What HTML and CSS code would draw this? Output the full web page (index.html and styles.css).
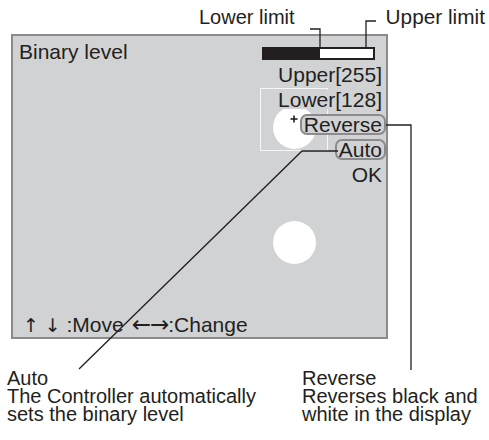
FILE: index.html
```html
<!DOCTYPE html>
<html lang="en">
<head>
    <meta charset="UTF-8">
    <meta name="viewport" content="width=device-width, initial-scale=1.0">
    <title>Binary level</title>
    <link rel="stylesheet" href="styles.css">
</head>
<body>
    <div class="figure">
        <!-- Callouts above the screen -->
        <div class="limits">
            <span class="limit-lower">Lower limit</span>
            <span class="limit-upper">Upper limit</span>
        </div>

        <!-- Controller screen -->
        <div class="screen">
            <div class="view">
                <div class="frame"></div>
                <div class="spot spot-top"></div>
                <div class="spot spot-bottom"></div>
            </div>

            <div class="screen-head">
                <span class="title">Binary level</span>
                <div class="level-bar"><div class="level-fill" style="width: 51%"></div></div>
            </div>

            <ul class="menu">
                <li><span>Upper[255]</span></li>
                <li><span>Lower[128]</span></li>
                <li><span class="boxed">Reverse</span></li>
                <li><span class="boxed">Auto</span></li>
                <li><span>OK</span></li>
            </ul>

            <div class="keys"><span class="arrow">↑</span> <span class="arrow">↓</span> :Move<span class="arrow arrow-wide">←→</span>:Change</div>
        </div>

        <!-- Notes under the screen -->
        <div class="notes">
            <p class="note note-auto">Auto<br>The Controller automatically<br>sets the binary level</p>
            <p class="note note-reverse">Reverse<br>Reverses black and<br>white in the display</p>
        </div>

        <!-- Leader lines -->
        <svg class="leaders" width="489" height="440" viewBox="0 0 489 440">
            <polyline points="310,29 320,29 320,47" />
            <polyline points="376,21 366,21 366,47" />
            <polyline points="386,125 411,125 411,370" />
            <polyline points="338,151 302,151 79,369" />
            <line x1="290.5" y1="119" x2="297.5" y2="119" class="cursor" />
            <line x1="294" y1="115.5" x2="294" y2="122.5" class="cursor" />
        </svg>
    </div>
</body>
</html>
```

FILE: styles.css
```css
body {
    margin: 0;
    background-color: #ffffff;
    color: #231f20;
    font-family: "Liberation Sans", Arial, sans-serif;
}

.figure {
    position: relative;
    width: 489px;
    height: 440px;
    overflow: hidden;
}

/* top callouts */
.limits {
    display: flex;
    padding-top: 7px;
    font-size: 20px;
    line-height: 20px;
}

.limit-lower {
    margin-left: 199px;
}

.limit-upper {
    margin-left: 91px;
    font-size: 20.8px;
}

/* screen */
.screen {
    position: relative;
    display: flex;
    flex-direction: column;
    box-sizing: border-box;
    width: 377px;
    height: 305px;
    margin: 7px 0 0 11px;
    border: 2px solid #8b8b8d;
    background-color: #d1d2d4;
    font-size: 21px;
}

.view .frame {
    position: absolute;
    left: 247px;
    top: 52px;
    width: 68px;
    height: 63px;
    box-sizing: border-box;
    border: 1.5px solid #f7f7f7;
}

.view .spot {
    position: absolute;
    width: 43px;
    height: 43px;
    border-radius: 50%;
    background-color: #ffffff;
}

.spot-top {
    left: 260px;
    top: 70px;
}

.spot-bottom {
    left: 260px;
    top: 185px;
}

.screen-head {
    position: relative;
    display: flex;
    justify-content: space-between;
    align-items: flex-start;
    padding: 6px 11px 0 6px;
}

.title {
    line-height: 20px;
}

.level-bar {
    box-sizing: border-box;
    width: 113px;
    height: 13px;
    margin-top: 5px;
    border: 2px solid #231f20;
    background-color: #ffffff;
}

.level-fill {
    height: 100%;
    background-color: #231f20;
}

.menu {
    position: relative;
    list-style: none;
    margin: 0;
    padding: 0 4px 0 0;
}

.menu li {
    display: flex;
    justify-content: flex-end;
    align-items: center;
    height: 25px;
}

.menu span {
    line-height: 19px;
    background-color: #d1d2d4;
}

.menu .boxed {
    line-height: 17px;
    padding: 0 2px;
    margin-right: -4px;
    border: 2px solid #8b8b8d;
    border-radius: 7px;
}

.keys {
    position: relative;
    margin-top: auto;
    padding-left: 10px;
    line-height: 23px;
}

.keys .arrow {
    font-family: "DejaVu Sans", sans-serif;
    font-size: 19px;
}

.keys .arrow-wide {
    margin-left: 8px;
    font-size: 23px;
    letter-spacing: -1px;
}

/* notes */
.notes {
    display: flex;
    margin-top: 30px;
}

.note {
    margin: 0;
    font-size: 20px;
    line-height: 18px;
}

.note-auto {
    width: 295px;
    padding-left: 7px;
}

/* leader lines */
.leaders {
    position: absolute;
    left: 0;
    top: 0;
    pointer-events: none;
}

.leaders polyline,
.leaders line {
    fill: none;
    stroke: #231f20;
    stroke-width: 1.3;
}

.leaders .cursor {
    stroke-width: 1.6;
}
```
